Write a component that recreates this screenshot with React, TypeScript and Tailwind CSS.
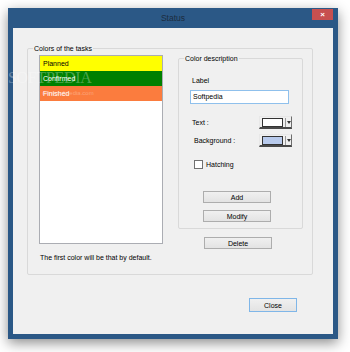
import React from "react";

const font = { fontFamily: '"Liberation Sans", Arial, sans-serif' };

interface ColorItem {
  label: string;
  bg: string;
  fg: string;
}

const items: ColorItem[] = [
  { label: "Planned", bg: "bg-[#ffff00]", fg: "text-black" },
  { label: "Confirmed", bg: "bg-[#008000]", fg: "text-white" },
  { label: "Finished", bg: "bg-[#fb7c3e]", fg: "text-white" },
];

const GroupBox: React.FC<{ title: string; className?: string; children?: React.ReactNode }> = ({
  title,
  className = "",
  children,
}) => (
  <div className={`relative border border-[#d9d9d9] rounded-[2px] ${className}`}>
    <span className="absolute -top-[5px] left-[5px] px-[1px] bg-[#f0f0f0] text-[7px] leading-[9px] text-black">
      {title}
    </span>
    {children}
  </div>
);

const Btn: React.FC<{ label: string; className?: string; primary?: boolean }> = ({ label, className = "", primary }) => (
  <div
    className={`flex items-center justify-center text-[7px] leading-[9px] text-black bg-gradient-to-b from-[#f0f0f0] to-[#e3e3e3] border ${
      primary ? "border-[#7fb6e8]" : "border-[#adadad]"
    } ${className}`}
  >
    {label}
  </div>
);

const Picker: React.FC<{ swatch: string }> = ({ swatch }) => (
  <div className="w-[33px] h-[13px] flex items-center bg-[#f0f0f0] border border-t-[#e8e8e8] border-l-[#e8e8e8] border-r-[#6d6d6d] border-b-[#4a4a4a] border-b-2">
    <div className={`ml-[2px] w-[22px] h-[9px] border border-[#333] ${swatch}`} />
    <div className="ml-[2px] w-px h-[9px] bg-[#9a9a9a]" />
    <div className="ml-[1px] w-0 h-0 border-l-[2px] border-r-[2px] border-t-[3px] border-l-transparent border-r-transparent border-t-[#333]" />
  </div>
);

export default function App() {
  return (
    <div className="w-[350px] h-[352px] bg-white pt-[8px] pl-[8px]" style={font}>
      <div className="w-[330px] h-[331px] bg-[#2b5886] flex flex-col px-[5px] pb-[5px] shadow-[0_4px_12px_rgba(0,0,0,0.45)]">
        {/* Title bar */}
        <div className="relative h-[20px] shrink-0 flex items-center justify-center">
          <span className="text-[8.5px] text-[#1c2c40]">Status</span>
          <div className="absolute right-0 top-[1px] w-[21px] h-[11px] bg-[#c75050] flex items-center justify-center">
            <span className="text-white text-[8px] leading-none font-bold">×</span>
          </div>
        </div>

        {/* Client area */}
        <div className="relative flex-1 bg-[#f0f0f0] flex flex-col">
          <GroupBox title="Colors of the tasks" className="mt-[20px] ml-[14px] w-[286px] h-[227px] flex">
            <div className="flex flex-col pl-[11px] pt-[6px]">
              <div className="w-[124px] h-[189px] bg-white border border-[#abadb3] flex flex-col">
                {items.map((it) => (
                  <div
                    key={it.label}
                    className={`h-[15px] flex items-center pl-[3px] text-[7px] leading-[9px] ${it.bg} ${it.fg}`}
                  >
                    {it.label}
                  </div>
                ))}
              </div>
              <div className="mt-[9px] pl-[1px] text-[7px] leading-[9px] text-black">
                The first color will be that by default.
              </div>
            </div>

            <div className="flex flex-col ml-[15px] pt-[9px]">
              <GroupBox title="Color description" className="w-[125px] h-[171px] flex flex-col pl-[13px]">
                <div className="mt-[17px] text-[7px] leading-[9px] text-black">Label</div>
                <div className="mt-[5px] -ml-[2px] w-[99px] h-[14px] bg-white border border-[#8fc0ec] flex items-center pl-[2px] text-[7px] text-black">
                  Softpedia
                </div>
                <div className="mt-[12px] w-[100px] flex items-center justify-between">
                  <span className="text-[7px] leading-[9px] text-black">Text :</span>
                  <Picker swatch="bg-white" />
                </div>
                <div className="mt-[5px] w-[100px] flex items-center justify-between">
                  <span className="pl-[2px] text-[7px] leading-[9px] text-black">Background :</span>
                  <Picker swatch="bg-[#b8caec]" />
                </div>
                <div className="mt-[13px] pl-[2px] flex items-center gap-[3px]">
                  <div className="w-[9px] h-[9px] bg-white border border-[#707070]" />
                  <span className="text-[7px] leading-[9px] text-black">Hatching</span>
                </div>
                <Btn label="Add" className="mt-[22px] ml-[11px] w-[68px] h-[12px]" />
                <Btn label="Modify" className="mt-[7px] ml-[11px] w-[68px] h-[12px]" />
              </GroupBox>
              <Btn label="Delete" className="mt-[8px] ml-[26px] w-[68px] h-[12px]" />
            </div>
          </GroupBox>

          <Btn label="Close" primary className="mt-[23px] ml-[236px] w-[48px] h-[14px]" />

          {/* watermark */}
          <div className="absolute left-[-5px] top-[42px] pointer-events-none select-none">
            <div
              className="text-[16px] leading-[16px] tracking-[-0.3px] text-white/30"
              style={{ fontFamily: '"Liberation Serif", serif' }}
            >
              SOFTPEDIA
            </div>
            <div className="mt-[3px] ml-[34px] text-[6px] leading-[8px] text-white/30">www.softpedia.com</div>
          </div>
        </div>
      </div>
    </div>
  );
}
